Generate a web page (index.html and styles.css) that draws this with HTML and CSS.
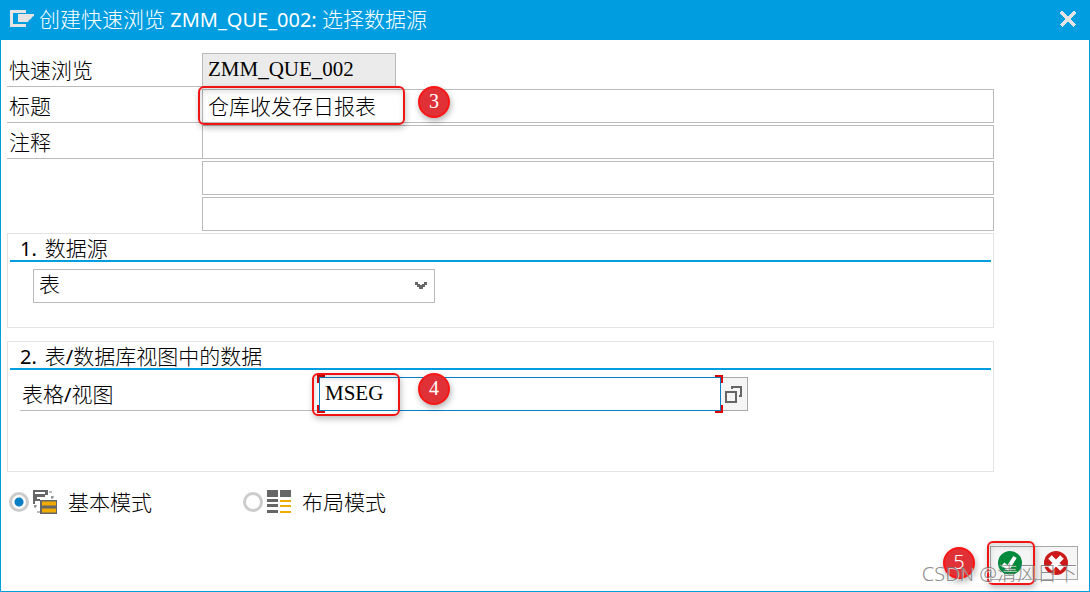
FILE: index.html
```
<!DOCTYPE html>
<html lang="zh-CN">
<head>
    <meta charset="UTF-8">
    <meta name="viewport" content="width=device-width, initial-scale=1.0">
    <title>创建快速浏览</title>
    <link rel="stylesheet" href="styles.css">
</head>
<body>

    <form class="dialog">
        <header class="titlebar">
            <svg class="titlebar-icon" width="26" height="20" viewBox="0 0 26 20">
                <path d="M17 2.500H2.500V16.500H17" fill="none" stroke="#e4e4e4" stroke-width="3"/>
                <path d="M9 5H25V7L23 8L22 10L20 11L19 13H9Z" fill="#e4e4e4"/>
            </svg>
            <h1>创建快速浏览<span class="latin"> ZMM_QUE_002: </span>选择数据源</h1>
            <button type="button" class="close" aria-label="关闭">
                <svg width="18" height="18" viewBox="0 0 18 18" shape-rendering="crispEdges">
                    <path d="M2 2L16 16M16 2L2 16" stroke="#e4e4e4" stroke-width="4"/>
                </svg>
            </button>
        </header>

        <main class="content">
            <div class="fields">
                <div class="row">
                    <label for="queryName">快速浏览</label>
                    <input type="text" id="queryName" class="short" value="ZMM_QUE_002" readonly>
                </div>
                <div class="row">
                    <label for="title">标题</label>
                    <div class="marked">
                        <input type="text" id="title" value="仓库收发存日报表">
                        <span class="frame frame-title"></span>
                        <span class="badge badge-title">3</span>
                    </div>
                </div>
                <div class="row">
                    <label for="note1">注释</label>
                    <input type="text" id="note1">
                </div>
                <div class="row">
                    <span></span>
                    <input type="text" id="note2" aria-label="注释 2">
                </div>
                <div class="row">
                    <span></span>
                    <input type="text" id="note3" aria-label="注释 3">
                </div>
            </div>

            <section class="group">
                <h2><span class="latin number">1.</span>数据源</h2>
                <div class="source">
                    <select aria-label="数据源">
                        <option>表</option>
                    </select>
                    <svg class="arrow" width="14" height="9" viewBox="0 0 14 9">
                        <path d="M1 1H4V3H6V4H8V3H10V1H13V4H11V6H9V8H5V6H3V4H1Z" fill="#666"/>
                    </svg>
                </div>
            </section>

            <section class="group group-table">
                <h2><span class="latin number">2.</span>表<span class="latin">/</span>数据库视图中的数据</h2>
                <div class="table-row">
                    <label for="table">表格<span class="latin">/</span>视图</label>
                    <div class="marked">
                        <input type="text" id="table" class="active" value="MSEG">
                        <span class="corners corners-left"></span>
                        <span class="corners corners-right"></span>
                        <span class="frame frame-table"></span>
                        <span class="badge badge-table">4</span>
                    </div>
                    <button type="button" class="lookup" aria-label="搜索帮助">
                        <svg width="20" height="20" viewBox="0 0 20 20" fill="none" stroke="#666" stroke-width="2">
                            <rect x="2" y="8" width="10" height="10"/>
                            <path d="M7 3H18" stroke-width="2"/>
                            <path d="M8 2V5M17 2V12H15"/>
                        </svg>
                    </button>
                </div>
            </section>

            <div class="modes">
                <label class="mode">
                    <input type="radio" name="mode" checked>
                    <svg width="24" height="26" viewBox="0 0 24 26">
                        <path d="M0 1H15V6H12V8H4V10H7V12H2V15H0ZM2 3V5H12V3Z" fill="#666" fill-rule="evenodd"/>
                        <path d="M16 3H19M19 7V10M18 8H21M2 16V19M1 17H4M4 23H7" stroke="#777" stroke-width="1"/>
                        <rect x="7" y="11" width="17" height="14" fill="#666"/>
                        <path d="M9 14.500H23M9 21.500H23" stroke="#f0ab00" stroke-width="4"/>
                    </svg>
                    <span>基本模式</span>
                </label>
                <label class="mode">
                    <input type="radio" name="mode">
                    <svg width="24" height="26" viewBox="0 0 24 26">
                        <path d="M0 1H11V8H0ZM13 1H24V8H13ZM0 10H11V13H0ZM0 15H11V18H0ZM0 21H11V24H0Z" fill="#666"/>
                        <path d="M13 12H24M13 17H24M13 23H24" stroke="#f0ab00" stroke-width="2"/>
                    </svg>
                    <span>布局模式</span>
                </label>
            </div>
        </main>

        <footer class="actions">
            <span class="badge badge-confirm">5</span>
            <div class="confirm">
                <button type="submit" aria-label="确定">
                    <svg width="24" height="24" viewBox="0 0 24 24">
                        <circle cx="12" cy="12" r="12" fill="#008a3b"/>
                        <path d="M5 13L10 17L17 6" fill="none" stroke="#fff" stroke-width="4"/>
                    </svg>
                </button>
                <span class="frame frame-confirm"></span>
            </div>
            <button type="button" aria-label="取消">
                <svg width="24" height="24" viewBox="0 0 24 24">
                    <circle cx="12" cy="12" r="12" fill="#cc1919"/>
                    <path d="M6 6L18 18M18 6L6 18" stroke="#fff" stroke-width="5"/>
                </svg>
            </button>
        </footer>

        <div class="watermark">CSDN @清风日下</div>
    </form>

</body>
</html>
```
FILE: styles.css
```
* {
    box-sizing: border-box;
}

body {
    margin: 0;
    font-family: "Noto Sans CJK SC", sans-serif;
    font-size: 21px;
    font-weight: 300;
    line-height: 26px;
    color: #000;
    background-color: #fff;
}

h1,
h2 {
    margin: 0;
    font-size: 21px;
    font-weight: 300;
    line-height: 26px;
}

.latin {
    font-family: "Noto Sans", sans-serif;
    font-size: 20px;
    font-weight: 400;
    line-height: 20px;
    white-space: pre;
}

.number {
    margin-right: 8px;
}

.dialog {
    position: relative;
    display: flex;
    flex-direction: column;
    min-height: 100vh;
    border: 1px solid #009de0;
    border-top: none;
}

.titlebar {
    display: flex;
    align-items: center;
    height: 40px;
    padding: 0 10px 2px 8px;
    color: #fff;
    background-color: #009de0;
}

.titlebar h1 {
    flex: 1;
    margin-left: 4px;
    padding-bottom: 2px;
}

.close {
    display: flex;
    padding: 2px;
    border: none;
    background: none;
    cursor: pointer;
}

.content {
    padding: 13px 95px 0 6px;
}

.fields {
    display: grid;
    gap: 2px;
}

.row {
    display: grid;
    grid-template-columns: 195px 1fr;
}

.row label,
.table-row label {
    height: 34px;
    padding: 3px 2px 0;
    border-bottom: 1px solid #bbb;
}

input[type="text"],
select {
    display: block;
    width: 100%;
    height: 34px;
    padding: 0 5px 2px;
    border: 1px solid #bbb;
    border-radius: 0;
    outline: none;
    color: #000;
    background-color: #fff;
    font-family: "Liberation Serif", "Noto Sans CJK SC", serif;
    font-size: 21px;
    font-weight: 300;
}

input.short {
    width: 194px;
    background-color: #ebebeb;
}

input.active {
    border-color: #0a7fc4;
}

.marked {
    position: relative;
}

.group {
    margin-top: 2px;
    padding-bottom: 24px;
    border: 1px solid #e3e3e3;
}

.group h2 {
    height: 28px;
    margin: 0 2px 7px;
    padding-left: 10px;
    border-bottom: 2px solid #009de0;
}

.group-table {
    margin-top: 13px;
    padding-bottom: 60px;
}

.source {
    position: relative;
    width: 402px;
    margin-left: 25px;
}

select {
    appearance: none;
}

.arrow {
    position: absolute;
    top: 12px;
    right: 7px;
    pointer-events: none;
}

.table-row {
    display: grid;
    grid-template-columns: 299px 402px 27px;
    padding-left: 12px;
}

.lookup,
.actions button {
    display: flex;
    align-items: center;
    justify-content: center;
    height: 34px;
    padding: 0;
    border: 1px solid #a8a8a8;
    background-color: #f5f5f5;
    cursor: pointer;
}

.lookup {
    border-left: none;
}

/* red corner marks of the focused field */
.corners {
    position: absolute;
    top: -2px;
    bottom: -2px;
    width: 8px;
    pointer-events: none;
    background:
        linear-gradient(#d00, #d00) 0 0 / 100% 2px no-repeat,
        linear-gradient(#d00, #d00) 0 100% / 100% 2px no-repeat;
}

.corners::before,
.corners::after {
    content: "";
    position: absolute;
    width: 2px;
    height: 8px;
    background-color: #d00;
}

.corners::before {
    top: 0;
}

.corners::after {
    bottom: 0;
}

.corners-left {
    left: -2px;
}

.corners-right {
    right: -2px;
}

.corners-right::before,
.corners-right::after {
    right: 0;
}

.modes {
    display: flex;
    margin-top: 13px;
    padding-left: 2px;
}

.mode {
    display: flex;
    align-items: center;
    width: 234px;
    height: 34px;
}

.mode input {
    appearance: none;
    width: 20px;
    height: 20px;
    margin: 0 4px 0 0;
    border: 3px solid #ccc;
    border-radius: 50%;
    background-color: #fff;
}

.mode input:checked {
    background: radial-gradient(circle, #0a7fc4 4px, #fff 5px);
}

.mode span {
    margin-left: 11px;
    padding-bottom: 2px;
}

.actions {
    display: flex;
    align-items: center;
    justify-content: flex-end;
    margin-top: auto;
    padding: 20px 11px 11px;
}

.actions button {
    width: 44px;
}

.actions .confirm button {
    padding-right: 4px;
}

.confirm {
    position: relative;
}

.frame {
    position: absolute;
    border: 2px solid #f01414;
    border-radius: 6px;
    box-shadow: 1px 3px 6px rgba(0, 0, 0, 0.25), inset 1px 3px 6px rgba(0, 0, 0, 0.15);
    pointer-events: none;
}

.frame-title {
    top: -3px;
    left: -4px;
    width: 207px;
    height: 39px;
}

.frame-table {
    top: -4px;
    left: -7px;
    width: 88px;
    height: 43px;
}

.frame-confirm {
    top: -5px;
    left: -3px;
    width: 48px;
    height: 44px;
}

.badge {
    width: 32px;
    height: 32px;
    border: 2px solid #fb1515;
    border-radius: 50%;
    color: #fff;
    background-color: #e03236;
    box-shadow: 1px 3px 6px rgba(0, 0, 0, 0.3);
    font-family: "Liberation Serif", serif;
    font-size: 20px;
    line-height: 26px;
    text-align: center;
    pointer-events: none;
}

.badge-title {
    position: absolute;
    top: -3px;
    left: 216px;
}

.badge-table {
    position: absolute;
    top: -4px;
    left: 99px;
}

.badge-confirm {
    margin-right: 15px;
    font-family: "Noto Sans", sans-serif;
    font-weight: 300;
}

.watermark {
    position: absolute;
    right: 12px;
    bottom: 4px;
    color: rgba(110, 110, 110, 0.8);
    font-family: "Noto Sans", "Noto Sans CJK SC", sans-serif;
    font-size: 20px;
    text-shadow: 1px 1px 0 rgba(255, 255, 255, 0.7);
    pointer-events: none;
}
```
